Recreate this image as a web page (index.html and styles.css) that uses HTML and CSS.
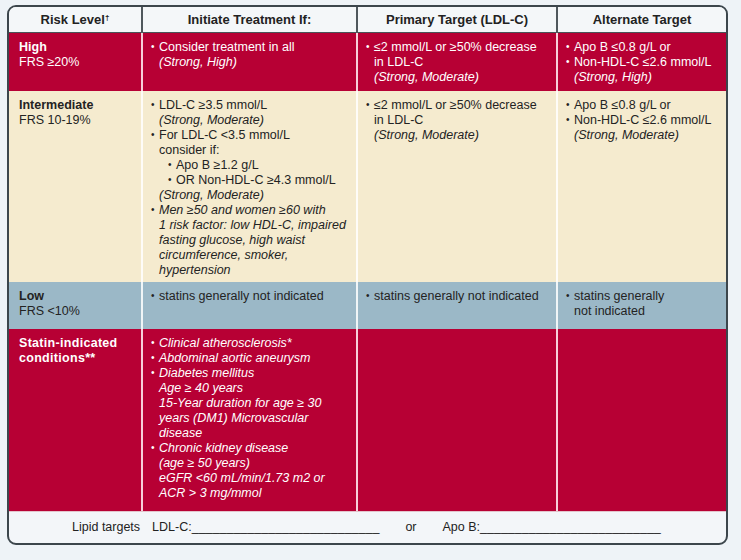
FILE: index.html
```html
<!DOCTYPE html>
<html lang="en">
<head>
<meta charset="utf-8">
<title>Lipid treatment guide</title>
<link rel="stylesheet" href="styles.css">
</head>
<body>
<div class="frame">
  <table class="guide">
    <colgroup>
      <col class="c1"><col class="c2"><col class="c3"><col class="c4">
    </colgroup>
    <thead>
      <tr class="head">
        <th>Risk Level<span class="dag">†</span></th>
        <th>Initiate Treatment If:</th>
        <th>Primary Target (LDL-C)</th>
        <th>Alternate Target</th>
      </tr>
    </thead>
    <tbody>
      <tr class="row red high">
        <td class="lvl"><b>High</b><br>FRS ≥20%</td>
        <td><ul><li>Consider treatment in all<br><i>(Strong, High)</i></li></ul></td>
        <td><ul><li>≤2 mmol/L or ≥50% decrease<br>in LDL-C<br><i>(Strong, Moderate)</i></li></ul></td>
        <td><ul><li>Apo B ≤0.8 g/L or</li><li>Non-HDL-C ≤2.6 mmol/L</li></ul><p class="note"><i>(Strong, High)</i></p></td>
      </tr>
      <tr class="row cream inter">
        <td class="lvl"><b>Intermediate</b><br>FRS 10-19%</td>
        <td>
          <ul>
            <li>LDL-C ≥3.5 mmol/L<br><i>(Strong, Moderate)</i></li>
            <li>For LDL-C &lt;3.5 mmol/L<br>consider if:
              <ul class="sub">
                <li>Apo B ≥1.2 g/L</li>
                <li>OR Non-HDL-C ≥4.3 mmol/L</li>
              </ul>
              <i>(Strong, Moderate)</i>
            </li>
            <li><i>Men ≥50 and women ≥60 with<br>1 risk factor: low HDL-C, impaired<br>fasting glucose, high waist<br>circumference, smoker,<br>hypertension</i></li>
          </ul>
        </td>
        <td><ul><li>≤2 mmol/L or ≥50% decrease<br>in LDL-C<br><i>(Strong, Moderate)</i></li></ul></td>
        <td><ul><li>Apo B ≤0.8 g/L or</li><li>Non-HDL-C ≤2.6 mmol/L</li></ul><p class="note"><i>(Strong, Moderate)</i></p></td>
      </tr>
      <tr class="row blue low">
        <td class="lvl"><b>Low</b><br>FRS &lt;10%</td>
        <td><ul><li>statins generally not indicated</li></ul></td>
        <td><ul><li>statins generally not indicated</li></ul></td>
        <td><ul><li>statins generally<br>not indicated</li></ul></td>
      </tr>
      <tr class="row red statin">
        <td class="lvl"><b class="spaced">Statin-indicated<br>conditions**</b></td>
        <td>
          <ul class="ital">
            <li>Clinical atherosclerosis*</li>
            <li>Abdominal aortic aneurysm</li>
            <li>Diabetes mellitus<br>Age ≥ 40 years<br>15-Year duration for age ≥ 30<br>years (DM1) Microvascular<br>disease</li>
            <li>Chronic kidney disease<br>(age ≥ 50 years)<br>eGFR &lt;60 mL/min/1.73 m2 or<br>ACR &gt; 3 mg/mmol</li>
          </ul>
        </td>
        <td></td>
        <td></td>
      </tr>
    </tbody>
  </table>
  <div class="foot">
    <span class="lbl">Lipid targets</span><span class="fld">LDL-C:___________________________</span><span class="or">or</span><span class="fld">Apo B:__________________________</span>
  </div>
</div>
</body>
</html>
```
FILE: styles.css
```css
html, body {
  margin: 0;
  padding: 0;
}
body {
  background: #eef3f7;
  font-family: "Liberation Sans", Arial, sans-serif;
  font-size: 12.5px;
  line-height: 15px;
  color: #232323;
}
.frame {
  margin: 5px 0 0 7px;
  width: 717px;
  border: 2px solid #3c464c;
  border-radius: 9px;
  overflow: hidden;
  background: #f3f6f9;
}
.guide {
  width: 717px;
  border-collapse: collapse;
  table-layout: fixed;
}
.c1 { width: 133px; }
.c2 { width: 215px; }
.c3 { width: 200px; }
.c4 { width: 169px; }

.head th {
  height: 25px;
  padding: 0;
  font-size: 13px;
  font-weight: bold;
  text-align: center;
  vertical-align: middle;
  color: #222;
  background: #f4f7f9;
  border-bottom: 1px solid #4a5358;
  border-left: 2px solid #4f585d;
}
.head th:first-child { border-left: none; }
.dag {
  font-size: 8px;
  vertical-align: 4px;
  line-height: 0;
}

.row td {
  vertical-align: top;
  padding: 7px 4px 0 8px;
  border-left: 2px solid rgba(255, 255, 255, 0.85);
}
.row td.lvl {
  border-left: none;
  padding-left: 10px;
}
.high td { height: 51px; }
.inter td { height: 184px; }
.low td { height: 40px; }
.statin td { height: 175px; }

.red { background: #b70034; color: #fff; }
.red td { border-left-color: rgba(255, 230, 236, 0.9); }
.cream { background: #f5ebcf; color: #232323; }
.blue { background: #9bb8c7; color: #232323; }

.spaced { letter-spacing: 0.3px; }

ul {
  list-style: none;
  margin: 0;
  padding: 0;
}
li {
  padding-left: 8px;
  text-indent: -8px;
}
li::before {
  content: "•";
  display: inline-block;
  width: 8px;
  text-indent: 0;
  font-size: 10px;
  line-height: 0;
  vertical-align: 1px;
}
ul.sub {
  padding-left: 9px;
}
ul.ital { font-style: italic; }
.note {
  margin: 0;
  padding-left: 8px;
}

.foot {
  height: 31px;
  line-height: 31px;
  padding-left: 63px;
  white-space: nowrap;
  color: #222;
  border-top: 1px solid #e3c4cc;
}
.lbl { margin-right: 12px; }
.or { margin: 0 26px 0 26px; }
```
